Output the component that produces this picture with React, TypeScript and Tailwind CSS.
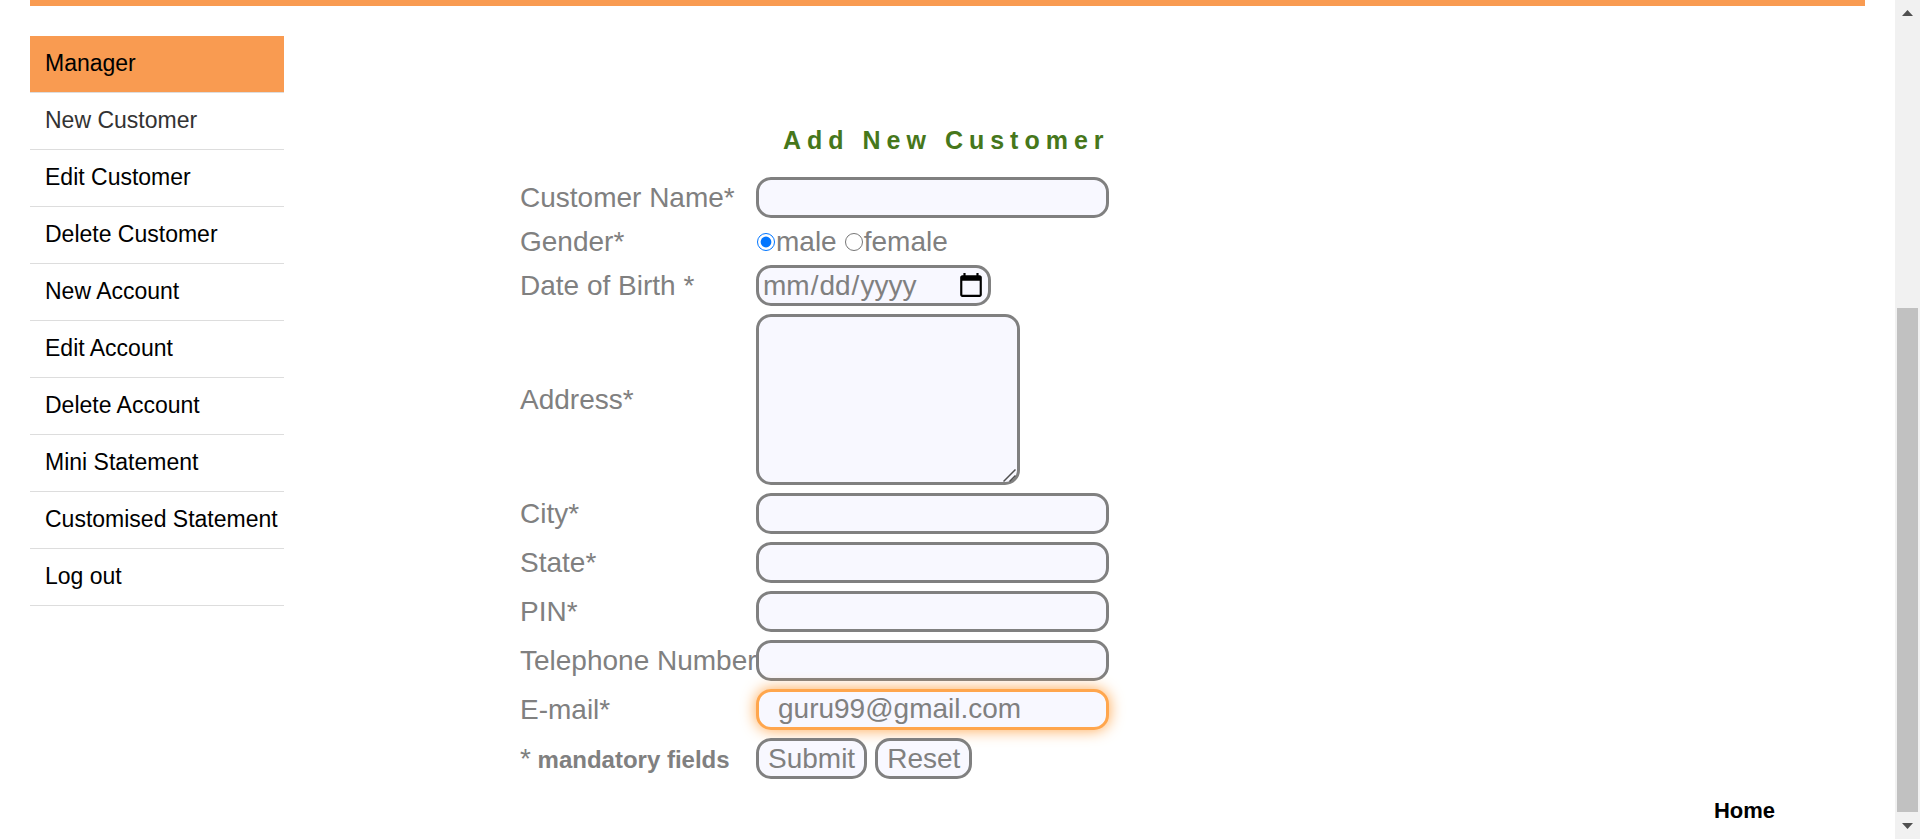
const menu = [
  "New Customer",
  "Edit Customer",
  "Delete Customer",
  "New Account",
  "Edit Account",
  "Delete Account",
  "Mini Statement",
  "Customised Statement",
  "Log out",
];

const box = "rounded-[15px] border-[3px] border-[#808080] bg-[#f8f8ff] text-[#808080]";
const field = `${box} block h-[41px] w-[353px] px-[19px] outline-none`;

const textFields = [
  { id: "city", label: "City*" },
  { id: "state", label: "State*" },
  { id: "pin", label: "PIN*" },
  { id: "telephone", label: "Telephone Number" },
];

function Sidebar() {
  return (
    <nav className="w-[254px] shrink-0 text-[23px] leading-8 text-black" aria-label="Manager">
      <ul>
        <li className="flex h-[57px] items-center border-b border-[#dddddd] bg-[#f99b51] pb-0.5 pl-[15px]">
          <a href="#manager">Manager</a>
        </li>
        {menu.map((item) => (
          <li key={item} className="flex h-[57px] items-center border-b border-[#dddddd] pb-0.5 pl-[15px]">
            <a href="#menu" className={item === "New Customer" ? "text-[#333333]" : "whitespace-nowrap"}>
              {item}
            </a>
          </li>
        ))}
      </ul>
    </nav>
  );
}

function CustomerForm() {
  return (
    <form className="text-[28px] leading-[31px] text-[#808080]" onSubmit={(e) => e.preventDefault()}>
      <h1 className="mb-5 pl-[263px] text-[25px] leading-[34px] font-bold tracking-[6px] whitespace-nowrap text-[#46771b]">
        Add New Customer
      </h1>
      <div className="grid grid-cols-[236px_1fr] items-center gap-y-2">
        <label htmlFor="name">Customer Name*</label>
        <input id="name" type="text" className={field} />

        <span id="gender">Gender*</span>
        <div role="radiogroup" aria-labelledby="gender" className="flex h-[31px] items-center gap-2">
          <label className="flex items-center gap-px">
            <input type="radio" name="gender" defaultChecked className="ml-px size-[18px]" />
            male
          </label>
          <label className="flex items-center gap-px">
            <input type="radio" name="gender" className="size-[18px]" />
            female
          </label>
        </div>

        <label htmlFor="dob">Date of Birth *</label>
        <input id="dob" type="date" className={`${box} block h-[41px] w-[235px] pr-px pl-[3px]`} />

        <label htmlFor="address">Address*</label>
        <div className="relative w-fit">
          <textarea
            id="address"
            className={`${box} block h-[171px] w-[264px] resize px-1 [&::-webkit-resizer]:hidden`}
          />
          <svg
            className="pointer-events-none absolute right-1 bottom-[3px] size-[13px]"
            viewBox="0 0 13 13"
            fill="none"
            stroke="#505050"
            strokeWidth="1.5"
            aria-hidden="true"
          >
            <path d="M0.5 12.5 12.5 0.5M6.5 12.5 12.5 6.5" />
          </svg>
        </div>

        {textFields.map(({ id, label }) => (
          <div key={id} className="contents">
            <label htmlFor={id} className="relative -z-10 whitespace-nowrap">
              {label}
            </label>
            <input id={id} type="text" className={field} />
          </div>
        ))}

        <label htmlFor="email">E-mail*</label>
        <input
          id="email"
          type="email"
          defaultValue="guru99@gmail.com"
          className="block h-[41px] w-[353px] rounded-[15px] border-[3px] border-[#ffa64d] bg-[#f8f8ff] px-[19px] pb-0.5 text-[#808080] shadow-[0_0_15px_#ffa64d] outline-none"
        />

        <p>
          *<b className="text-[24px]"> mandatory fields</b>
        </p>
        <div className="flex gap-2">
          <button type="submit" className={`${box} relative h-[41px] px-[9px]`}>
            Submit
          </button>
          <button type="reset" className={`${box} relative h-[41px] px-[9px]`}>
            Reset
          </button>
        </div>
      </div>
    </form>
  );
}

function ScrollBar() {
  return (
    <div className="flex w-[25px] shrink-0 flex-col items-center bg-[#f1f1f1]" aria-hidden="true">
      <svg className="h-[27px] w-[25px]" viewBox="0 0 25 27" fill="#505050">
        <path d="M7 16 12.5 10 18 16Z" />
      </svg>
      <div className="flex-[281]" />
      <div className="w-[21px] flex-[504] bg-[#c1c1c1]" />
      <svg className="h-[27px] w-[25px]" viewBox="0 0 25 27" fill="#505050">
        <path d="M7 11 12.5 17 18 11Z" />
      </svg>
    </div>
  );
}

export default function App() {
  return (
    <div className="isolate flex h-screen bg-white font-['Liberation_Sans',Arial,sans-serif]">
      <div className="min-w-0 flex-1 overflow-hidden px-[30px]">
        <header className="h-1.5 bg-[#f99b51]" />
        <div className="mt-[30px] flex gap-[236px]">
          <Sidebar />
          <main className="pt-[87px]">
            <CustomerForm />
          </main>
        </div>
        <footer className="mt-4 flex justify-end pr-[90px] text-[22px] leading-8 font-bold text-black">
          <a href="#home">Home</a>
        </footer>
      </div>
      <ScrollBar />
    </div>
  );
}
